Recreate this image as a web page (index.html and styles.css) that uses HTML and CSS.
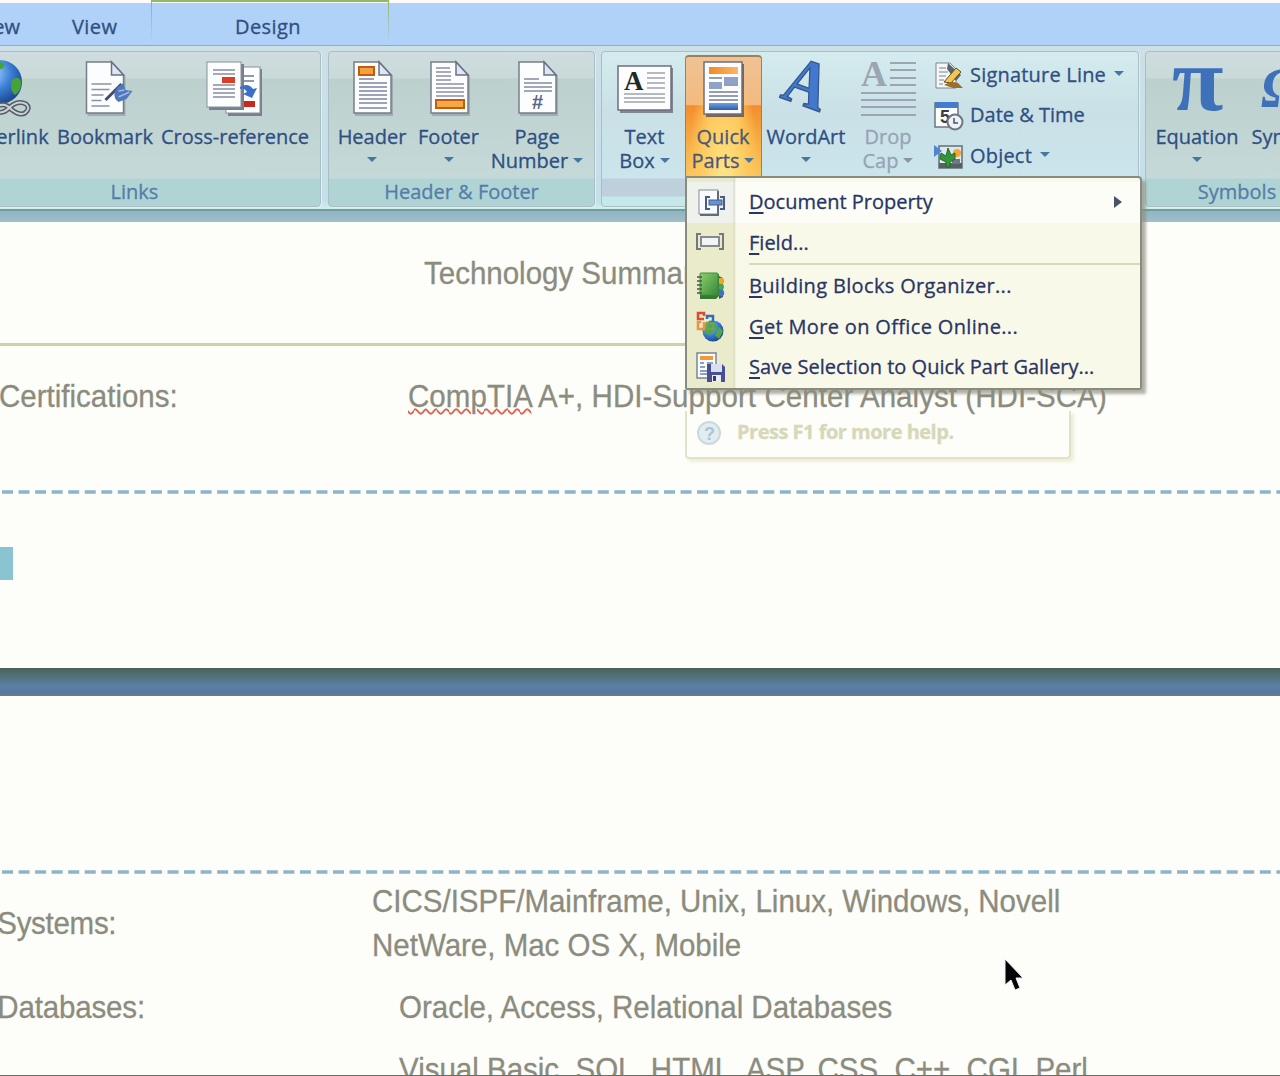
FILE: index.html
```html
<!DOCTYPE html>
<html lang="en">
<head>
<meta charset="utf-8">
<title>Document - Quick Parts</title>
<link rel="stylesheet" href="styles.css">
</head>
<body>
<svg class="defs" width="0" height="0">
  <defs>
    <linearGradient id="blue" x1="0" y1="0" x2="0" y2="1"><stop offset="0" stop-color="#6d9ee6"/><stop offset="1" stop-color="#2d5da8"/></linearGradient>
    <linearGradient id="orange" x1="0" y1="0" x2="1" y2="0"><stop offset="0" stop-color="#f08a24"/><stop offset="1" stop-color="#fbb765"/></linearGradient>
    <radialGradient id="globe" cx=".35" cy=".3" r=".8"><stop offset="0" stop-color="#9fd0fa"/><stop offset=".5" stop-color="#3a7fd6"/><stop offset="1" stop-color="#173a80"/></radialGradient>
    <linearGradient id="green" x1="0" y1="0" x2="1" y2="1"><stop offset="0" stop-color="#8fd06a"/><stop offset="1" stop-color="#34873a"/></linearGradient>
    <symbol id="sheet" viewBox="0 0 46 60">
      <path d="M4 4H30L42 17V57H4Z" fill="#7d8894" opacity=".5"/>
      <path d="M3 3H28L40 16V54H3Z" fill="#fcfdff" stroke="#777c8c" stroke-width="1.5"/>
      <path d="M28 3V16H40Z" fill="#dde6f2" stroke="#6b7284" stroke-width="1.5"/>
    </symbol>
  </defs>
</svg>

<nav class="tabs">
  <span class="tab tab-review">Review</span>
  <span class="tab tab-view">View</span>
  <span class="tab tab-design">Design</span>
</nav>

<section class="ribbon">
  <div class="group links">
    <div class="items">
      <div class="btn w100">
        <svg class="icon" width="60" height="60" viewBox="0 0 60 60"><circle cx="26" cy="23" r="22" fill="url(#globe)"/><path d="M20 2Q28 2 31 6Q28 12 22 9ZM38 21Q44 16 47 22Q48 31 41 36Q35 31 38 21ZM12 18Q24 18 24 28Q18 38 12 34Z" fill="#46a33c"/><path d="M22 53Q30 55 36 48Q44 41 52 45Q57 49 51 54Q46 57 38 51Q31 43 24 47" fill="none" stroke="#555e66" stroke-width="5"/><path d="M22 53Q30 55 36 48Q44 41 52 45Q57 49 51 54Q46 57 38 51Q31 43 24 47" fill="none" stroke="#cbd2d5" stroke-width="2"/></svg>
        <span>Hyperlink</span>
      </div>
      <div class="btn w102">
        <svg class="icon nudge-1" width="46" height="60" viewBox="0 0 46 60"><use href="#sheet" width="46" height="60"/><path d="M8 25H28M8 30.500H26M8 36H20M8 41.500H18M8 47H26" stroke="#8c91a6" stroke-width="1.6"/><path d="M22 41L38 25" stroke="#404d70" stroke-width="3"/><path d="M34 28L40 24L42 31L49 32L43 40L35 43Q30 40 31 33Z" fill="#5277bd"/><path d="M35 38L46 33M35 32L41 31" stroke="#9db8e8" stroke-width="1.5"/></svg>
        <span>Bookmark</span>
      </div>
      <div class="btn w158">
        <svg class="icon nudge-m2" width="58" height="60" viewBox="0 0 58 60"><rect x="23" y="10" width="34" height="47" fill="#77808c"/><rect x="21" y="8" width="34" height="46" fill="#fcfdff" stroke="#8a8f9f"/><path d="M38 17H49M38 22H49" stroke="#70768c" stroke-width="1.5"/><rect x="37" y="42" width="13" height="6" fill="#c9281c"/><rect x="4" y="5" width="35" height="46" fill="#77808c"/><rect x="2" y="3" width="34" height="45" fill="#fcfdff" stroke="#8a8f9f"/><path d="M8 11H30M8 15H30M8 26H30M8 30H30M8 34H30M8 38H30" stroke="#878ca2" stroke-width="1.5"/><rect x="17" y="18" width="13" height="6" fill="#dd3d22"/><path d="M35 28Q43 23 48 30L52 29L47 39L38 35L42 33Q39 28 35 30Z" fill="#3d6fc8"/></svg>
        <span>Cross-reference</span>
      </div>
    </div>
    <div class="caption">Links</div>
  </div>

  <div class="group hf">
    <div class="items">
      <div class="btn w76">
        <svg class="icon nudge-2" width="46" height="60" viewBox="0 0 46 60"><use href="#sheet" width="46" height="60"/><path d="M8 20H23M8 24H36M8 28H36M8 32H36M8 36H36M8 40H36M8 44H36M8 49H36" stroke="#7f84a0" stroke-width="1.6"/><rect x="8" y="8" width="15" height="8" fill="#f5a23c" stroke="#c05d12" stroke-width="2"/></svg>
        <span>Header</span><i class="arrow"></i>
      </div>
      <div class="btn w77">
        <svg class="icon nudge-2" width="46" height="60" viewBox="0 0 46 60"><use href="#sheet" width="46" height="60"/><path d="M8 9H22M8 13H23M8 17H23M8 21H23M8 25H36M8 29H36M8 33H36M8 37H36" stroke="#8a8fa6" stroke-width="1.6"/><rect x="8" y="41" width="28" height="8" fill="#f7a744" stroke="#c05d12" stroke-width="2"/></svg>
        <span>Footer</span><i class="arrow"></i>
      </div>
      <div class="btn w100">
        <svg class="icon nudge-2" width="46" height="60" viewBox="0 0 46 60"><use href="#sheet" width="46" height="60"/><path d="M8 20H23M8 24H36M8 28H36M8 32H36" stroke="#8389a2" stroke-width="1.6"/><text x="16" y="50" class="hash">#</text></svg>
        <span>Page</span><span>Number<i class="arrow side"></i></span>
      </div>
    </div>
    <div class="caption">Header &amp; Footer</div>
  </div>

  <div class="group text">
    <div class="items">
      <div class="btn w77">
        <svg class="icon" width="58" height="60" viewBox="0 0 58 60"><rect x="4" y="9" width="53" height="45" fill="#7d8791"/><rect x="2" y="7" width="53" height="44" fill="#fcfdfc" stroke="#697080" stroke-width="1.5"/><text x="8" y="31" class="serif-a">A</text><path d="M31 14H49M31 19H49M31 24H49M31 29H49M8 35H49M8 39H49M8 43H49" stroke="#9da2ae" stroke-width="1.5"/></svg>
        <span>Text</span><span>Box<i class="arrow side"></i></span>
      </div>
      <div class="btn w77 active">
        <svg class="icon" width="46" height="60" viewBox="0 0 46 60"><rect x="5" y="4" width="38" height="53" fill="#7d6748"/><rect x="3" y="2" width="38" height="52" fill="#fcfcfc" stroke="#6c7080" stroke-width="1.5"/><rect x="8" y="7" width="29" height="7" fill="url(#orange)"/><path d="M8 18H21M23 25H37M8 32H37M8 36H37M8 40H37" stroke="#747c98" stroke-width="1.7"/><rect x="23" y="17" width="14" height="7" fill="#8fa2c7"/><rect x="8" y="22" width="13" height="7" fill="#8fa2c7"/><rect x="8" y="43" width="29" height="7" fill="url(#blue)"/></svg>
        <span>Quick</span><span>Parts<i class="arrow side"></i></span>
      </div>
      <div class="btn w88">
        <svg class="icon" width="60" height="60" viewBox="0 0 60 60"><text transform="matrix(1.18 .43 -.49 1.32 3 38)" class="wordart">A</text></svg>
        <span>WordArt</span><i class="arrow"></i>
      </div>
      <div class="btn w76 disabled">
        <svg class="icon nudge-2" width="60" height="60" viewBox="0 0 60 60"><text x="1" y="27" class="drop-a">A</text><path d="M30 4H56M30 11H56M30 19H56M30 26H56M1 34H56M1 41H56M1 48H56M1 56H56" stroke="#9da4b3" stroke-width="2"/></svg>
        <span>Drop</span><span>Cap<i class="arrow side"></i></span>
      </div>
      <div class="commands">
        <div class="cmd"><svg width="32" height="30" viewBox="0 0 32 30"><path d="M4 3H18L24 9V28H4Z" fill="#f5f7f6" stroke="#808590"/><path d="M7 8H14M7 12H16M7 16H14M7 20H12M7 24H11" stroke="#7b8498"/><path d="M16 3L29 15L24 21L15 9Z" fill="#59646b"/><path d="M12 22L24 8L29 12L19 23Z" fill="#f4c64f" stroke="#5e4b25"/><path d="M12 25Q19 20 26 23L31 28H21Z" fill="#9b702d"/></svg><span class="wide">Signature Line</span><i class="arrow"></i></div>
        <div class="cmd"><svg width="32" height="30" viewBox="0 0 32 30"><rect x="3" y="2" width="23" height="24" fill="#fcfdff" stroke="#6e7485" stroke-width="1.5"/><rect x="3" y="1" width="23" height="6" fill="#457bd1"/><text x="8" y="22" class="five">5</text><circle cx="23" cy="21" r="7.5" fill="#eef2f6" stroke="#6d7682" stroke-width="2"/><path d="M22 17V22H26" fill="none" stroke="#45536d" stroke-width="1.5"/></svg><span>Date &amp; Time</span></div>
        <div class="cmd"><svg width="32" height="30" viewBox="0 0 32 30"><rect x="7" y="5" width="23" height="22" fill="#dde8ed" stroke="#666d77" stroke-width="1.5"/><rect x="7" y="22" width="23" height="5" fill="#586064"/><circle cx="25" cy="12" r="4" fill="#f5a633"/><rect x="20" y="18" width="8" height="5" fill="#6b7888"/><path d="M14 26V21L8 18L9 12L14 15L16 7L19 14L23 12V18L18 21V26Z" fill="#34943a" stroke="#216b2d"/><path d="M2 4L10 10L2 16Z" fill="#4f83da"/></svg><span class="wide">Object</span><i class="arrow"></i></div>
      </div>
    </div>
    <div class="caption"></div>
  </div>

  <div class="group symbols">
    <div class="items">
      <div class="btn w92">
        <svg class="icon" width="60" height="60" viewBox="0 0 60 60"><text transform="translate(5 51) scale(1.02 1)" class="pi">π</text></svg>
        <span>Equation</span><i class="arrow"></i>
      </div>
      <div class="btn w86">
        <svg class="icon" width="60" height="60" viewBox="0 0 60 60"><text x="5" y="48" class="omega">Ω</text></svg>
        <span>Symbol</span><i class="arrow"></i>
      </div>
    </div>
    <div class="caption">Symbols</div>
  </div>
</section>
<div class="ruler"></div>

<main class="document">
  <section class="page first">
    <h1 class="doc-text title">Technology Summary</h1>
    <hr class="rule">
    <div class="row cert">
      <span class="doc-text label">Certifications:</span>
      <span class="doc-text value"><span class="misspelled">CompTIA</span> A+, HDI-Support Center Analyst (HDI-SCA)</span>
    </div>
    <svg class="dashes" width="1280" height="4"><path d="M2 2H1280" stroke="#8db4ca" stroke-width="3.5" stroke-dasharray="11 5.55"/></svg>
    <div class="selection"></div>
  </section>
  <div class="page-gap"></div>
  <section class="page second">
    <svg class="dashes" width="1280" height="4"><path d="M2 2H1280" stroke="#8db4ca" stroke-width="3.5" stroke-dasharray="11 5.55"/></svg>
    <div class="row systems">
      <span class="doc-text label">Systems:</span>
      <span class="doc-text value">CICS/ISPF/Mainframe, Unix, Linux, Windows, Novell<br>NetWare, Mac OS X, Mobile</span>
    </div>
    <div class="row databases">
      <span class="doc-text label">Databases:</span>
      <span class="doc-text value">Oracle, Access, Relational Databases</span>
    </div>
    <div class="row languages">
      <span class="doc-text label"></span>
      <span class="doc-text value">Visual Basic, SQL, HTML, ASP, CSS, C++, CGI, Perl</span>
    </div>
  </section>
</main>

<div class="tip">
  <svg width="26" height="26" viewBox="0 0 26 26"><circle cx="13" cy="13" r="11" fill="#e2edf0" stroke="#cbd9dc" stroke-width="2"/><text x="8" y="20" class="help">?</text></svg>
  <span>Press F1 for more help.</span>
</div>

<div class="menu">
  <div class="entry hover"><span class="gutter"><svg width="30" height="30" viewBox="0 0 30 30"><rect x="4" y="3" width="19" height="24" fill="#f9fbfc" stroke="#858b98"/><path d="M23 4V28H5" fill="none" stroke="#646c7c" stroke-width="2"/><path d="M15 10H11V22H15M25 10H29V22H25" fill="none" stroke="#495b88" stroke-width="2"/><rect x="14" y="13" width="13" height="5" fill="#6692d2" stroke="#3f6199"/></svg></span><span class="name"><u>D</u>ocument Property</span><i class="sub"></i></div>
  <div class="entry"><span class="gutter"><svg width="30" height="30" viewBox="0 0 30 30"><path d="M6 6H2V21H6M24 6H28V21H24" fill="none" stroke="#74777b" stroke-width="2"/><rect x="6" y="9" width="18" height="9" fill="#f3f5f4" stroke="#858990" stroke-width="2"/></svg></span><span class="name"><u>F</u>ield...</span></div>
  <div class="divider"></div>
  <div class="entry long"><span class="gutter"><svg width="30" height="30" viewBox="0 0 30 30"><path d="M24 5L28 7V26L24 28Z" fill="#4e565d"/><circle cx="26" cy="10" r="3.2" fill="#f1a52d"/><circle cx="26" cy="16" r="3" fill="#4aa84a"/><circle cx="26" cy="22" r="3.2" fill="#3077cc"/><path d="M5 3H24V25L21 28H5Z" fill="#347b31"/><rect x="5" y="2" width="18" height="22" rx="1" fill="url(#green)" stroke="#3d8d3c"/><path d="M2 6H7M2 10H7M2 14H7M2 18H7M2 22H7" stroke="#46584b" stroke-width="1.5"/></svg></span><span class="name"><u>B</u>uilding Blocks Organizer...</span></div>
  <div class="entry long"><span class="gutter"><svg width="30" height="32" viewBox="0 0 30 32"><circle cx="18" cy="20" r="10.500" fill="url(#globe)"/><path d="M12 12Q22 10 22 17L15 24L9 22ZM24 16L28 20L24 28L20 24Z" fill="#54a548"/><g fill="none" stroke-width="2.5"><path d="M9 8H3V2H9V5" stroke="#df4930"/><path d="M12 8V5H18V11H14" stroke="#3469bd"/><path d="M9 11V18H3V11H6" stroke="#ec9346"/><path d="M12 12H18V18H12Z" stroke="#68a659"/></g></svg></span><span class="name"><u>G</u>et More on Office Online...</span></div>
  <div class="entry"><span class="gutter"><svg width="30" height="30" viewBox="0 0 30 30"><rect x="2" y="1" width="19" height="25" fill="#fbfcff" stroke="#7c8495" stroke-width="1.5"/><rect x="5" y="4" width="13" height="4" fill="#f09a39"/><path d="M5 11H9M12 11H18M5 15H10M5 19H12M5 22H12" stroke="#87a1c8" stroke-width="2"/><path d="M12 12H27L30 15V30H12Z" fill="#4a4f95"/><rect x="16" y="12" width="11" height="8" fill="#d9def3"/><rect x="17" y="23" width="9" height="7" fill="#e8edf6"/><rect x="18" y="24" width="3" height="5" fill="#343c72"/></svg></span><span class="name"><u>S</u>ave Selection to Quick Part Gallery...</span></div>
</div>

<svg class="pointer" width="22" height="34" viewBox="0 0 22 34"><path d="M2 1V27L8 22L12 32L17 30L13 20H20Z" fill="#050508" stroke="#f2f2f4" stroke-width="1"/></svg>
</body>
</html>
```

FILE: styles.css
```css
* { box-sizing: border-box; }
body {
  margin: 0;
  width: 1280px;
  height: 1076px;
  position: relative;
  overflow: hidden;
  border-bottom: 1px solid #6b6d66;
  background: #fdfdf9;
  color: #2f4f82;
  font: 500 20px/24px "Open Sans", "Noto Sans", sans-serif;
  -webkit-text-stroke: .3px;
}
.defs { position: absolute; }
svg { display: block; flex: none; overflow: visible; }

/* tab strip */
.tabs {
  display: flex;
  height: 46px;
  padding-top: 3px;
  background: linear-gradient(#fbfcfa 3px, #b0d2f8 3px);
  border-bottom: 1px solid #8cabd0;
}
.tab { line-height: 48px; white-space: nowrap; }
.tab-review { width: 20px; display: flex; justify-content: flex-end; }
.tab-view { width: 131px; padding-left: 52px; letter-spacing: .4px; }
.tab-design {
  width: 238px;
  height: 42px;
  margin-top: -3px;
  padding: 1px 4px 0 0;
  letter-spacing: .4px;
  text-align: center;
  border: solid #9cbfa6;
  border-width: 2px 1px 0;
  border-image: linear-gradient(#8fb964, #b0d2f8) 1;
}

/* ribbon */
.ribbon {
  display: flex;
  gap: 7px;
  height: 165px;
  padding-top: 5px;
  background: linear-gradient(#cddfe7, #c4dfe9 95%, #cdf0ec);
  border-bottom: 2px solid #6f9c9c;
}
.group {
  flex: none;
  height: 156px;
  display: flex;
  flex-direction: column;
  border: 1px solid #a9bfc5;
  border-radius: 4px;
  background: linear-gradient(#cfdce0 0, #c9dad8 26px, #bcd1ce 27px, #c5d9d8 126px, #b0d4d4 127px);
  box-shadow: 1px 1px #e2eff1;
  overflow: hidden;
}
.links { width: 373px; margin-left: -52px; }
.hf { width: 267px; }
.text { width: 538px; margin-left: -1px; background: linear-gradient(#d4ecee, #c9e0e6 60px, #cbe5ec 126px, #bdd0dc 127px 144px, #c5e8ea 145px); overflow: visible; }
.symbols { width: 184px; margin-left: -1px; }
.items { display: flex; height: 126px; padding-left: 5px; }
.text .items { padding-left: 4px; }
.caption { height: 28px; line-height: 28px; text-align: center; color: #557da9; }
.btn {
  display: flex;
  flex-direction: column;
  align-items: center;
  flex: none;
  padding-top: 7px;
  white-space: nowrap;
}
.icon { margin-bottom: 6px; }
.nudge-1 { transform: translateX(1.5px); }
.nudge-2 { transform: translateX(2px); }
.nudge-m2 { transform: translateX(-1px); }
.w76 { width: 76px; }
.w77 { width: 77px; }
.w86 { width: 86px; }
.w88 { width: 88px; }
.w92 { width: 92px; }
.w100 { width: 100px; }
.w102 { width: 102px; }
.w158 { width: 158px; }
.active {
  height: 122px;
  margin: 3px 0 0 2px;
  padding: 3px 3px 0 0;
  border: 1px solid #9d8058;
  border-top-width: 2px;
  border-radius: 4px 4px 0 0;
  background:
    radial-gradient(ellipse at 50% 110%, #ffe98f, #fdc95d 45%, transparent 70%),
    linear-gradient(#efc294 0, #f3ba80 40%, #f38d2d 41%, #f6ac42 70%, #f8c55b);
  color: #4a5878;
}
.active .icon { margin-bottom: 5px; transform: translateX(2px); }
.active span { transform: translateX(1px); }
.disabled { color: #96a3b4; }
.disabled .arrow { border-top-color: #8697a4; }
.arrow {
  width: 0;
  height: 0;
  border: 5px solid transparent;
  border-top-color: #4776a2;
  border-bottom: 0;
  margin-top: 8px;
}
.arrow.side { display: inline-block; margin: 0 0 5px 5px; }
.commands { padding: 8px 0 0 6px; display: flex; flex-direction: column; gap: 10.5px; }
.cmd { display: flex; align-items: center; height: 30px; gap: 5px; white-space: nowrap; }
.cmd .arrow { margin: -3px 0 0 3px; }
.cmd span { margin: -1px 0 0 1px; }
.wide { letter-spacing: .2px; }
.hash { font: bold 20px "Liberation Sans", sans-serif; fill: #5a6684; }
.serif-a { font: bold 27px "Liberation Serif", serif; fill: #1e2926; }
.wordart { font: bold 48px "Liberation Serif", serif; fill: #4478cc; stroke: #34578f; stroke-width: 1; }
.drop-a { font: bold 36px "Liberation Serif", serif; fill: #9ba5b3; }
.five { font: bold 18px "Liberation Sans", sans-serif; fill: #383c4b; }
.pi { font: bold 92px "Liberation Serif", serif; fill: #3f71ba; }
.omega { font: italic bold 58px "Liberation Serif", serif; fill: #3f71ba; }
.ruler { height: 11px; background: linear-gradient(#91b3c1, #a2bfcb); }

/* document */
.page { display: flex; flex-direction: column; }
.first { height: 446px; }
.doc-text {
  font: 400 32px/44px "Liberation Sans", Arial, sans-serif;
  color: #8b8c7e;
  white-space: nowrap;
  transform: scaleX(.9215);
  transform-origin: left;
}
.title { margin: 29px 0 0 424px; }
.rule { width: 686px; height: 3px; margin: 48px 0 0; border: 0; background: #ced0a6; }
.row { display: flex; }
.label { width: 370px; flex: none; }
.cert { padding-top: 28px; }
.cert .label { text-indent: -1px; }
.cert .value { margin-left: 38px; letter-spacing: .07px; }
.misspelled { text-decoration: underline wavy #dc6654 1.5px; text-underline-offset: 1px; }
.cert + .dashes { margin-top: 72px; }
.selection { width: 13px; height: 33px; margin-top: 53px; background: #8bc4d1; }
.page-gap {
  height: 28px;
  background: linear-gradient(#4b6259, #4f7179 8px, #5c80a4 18px, #5677a0 25px, #687e80);
}
.second { padding-top: 174px; }
.systems { align-items: center; padding-top: 5px; }
.systems .label { text-indent: -3px; letter-spacing: -.3px; }
.systems .value { margin-left: 2px; }
.databases { padding-top: 18px; }
.databases .label { text-indent: -3px; letter-spacing: -.15px; }
.databases .value, .languages .value { margin-left: 29px; }
.languages { padding-top: 18px; }

/* tooltip behind the menu */
.tip {
  position: absolute;
  left: 685px;
  top: 411px;
  width: 386px;
  height: 48px;
  padding: 9px 0 0 9px;
  display: flex;
  gap: 15px;
  border: 2px solid #e1e2c8;
  border-top: 0;
  border-radius: 0 0 4px 4px;
  box-shadow: 3px 3px 3px #eeeedc;
  color: #d6d8b8;
  font-weight: 700;
  letter-spacing: -.5px;
}
.help { font: bold 18px "Liberation Sans", sans-serif; fill: #a9c3d9; }

/* Quick Parts menu */
.menu {
  position: absolute;
  left: 685px;
  top: 176px;
  width: 457px;
  height: 214px;
  padding-top: 4px;
  border: 2px solid #898b80;
  border-radius: 2px 4px 2px 2px;
  background: linear-gradient(90deg, #eaebca 46px, #d7d8bc 47px, #f9f9ea 49px);
  box-shadow: 4px 4px 3px #8d8e7daa;
  color: #293565;
}
.entry { display: flex; align-items: center; height: 40.5px; white-space: nowrap; }
.hover { background: linear-gradient(90deg, #eff1ed 46px, #d9dbcc 47px, #fdfdf8 49px); }
.gutter { width: 62px; padding-left: 8px; flex: none; }
.name { flex: 1; }
.long .name { letter-spacing: .34px; }
.name u { text-underline-offset: 3px; text-decoration-thickness: 2px; }
.sub { border: 6px solid transparent; border-left: 8px solid #4a5268; border-right: 0; margin-right: 18px; }
.divider { height: 3px; margin-left: 62px; border-top: 2px solid #d9dabd; }
.pointer { position: absolute; left: 1003px; top: 958px; }
```
